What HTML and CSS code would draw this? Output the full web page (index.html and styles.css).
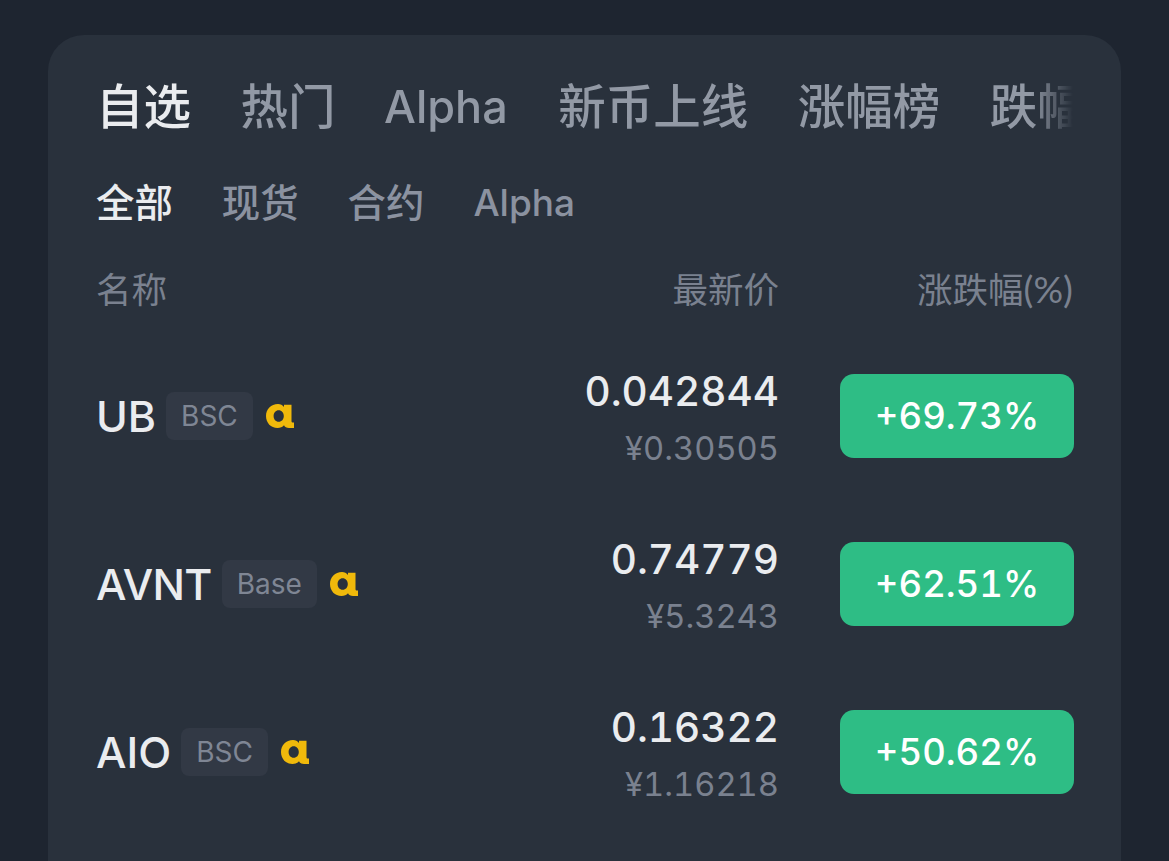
FILE: index.html
```html
<!DOCTYPE html>
<html lang="zh">
<head>
    <meta charset="utf-8">
    <title>自选</title>
    <link rel="stylesheet" href="styles.css">
</head>
<body>
    <div class="card">
      <div class="tabs">
        <span class="tab active">自选</span>
        <span class="tab">热门</span>
        <span class="tab latin">Alpha</span>
        <span class="tab">新币上线</span>
        <span class="tab">涨幅榜</span>
        <span class="tab">跌幅榜</span>
      </div>

      <div class="subtabs">
        <span class="subtab active">全部</span>
        <span class="subtab">现货</span>
        <span class="subtab">合约</span>
        <span class="subtab latin">Alpha</span>
      </div>

      <div class="table-head">
        <span>名称</span>
        <span class="head-price">最新价</span>
        <span class="head-change">涨跌幅<span class="unit">(%)</span></span>
      </div>

      <div class="row">
        <div class="name">
          <span class="symbol">UB</span>
          <span class="chain">BSC</span>
          <svg class="alpha" viewBox="0 0 28 24"><path fill-rule="evenodd" d="M12 0C5 0 0 5 0 12s5 12 11.500 12c2.800 0 5-1 6.500-2.800.8 1.800 2.500 2.800 5 2.800h5v-5.500H27c-1 0-1.500-.5-1.500-1.500V.8H18v2.200C16.500 1 14.500 0 12 0zm.7 6.200c3 0 5.100 2.500 5.100 5.800s-2.100 5.800-5.100 5.800-5.100-2.500-5.100-5.800 2.100-5.800 5.100-5.800z"/></svg>
        </div>
        <div class="price">
          <div class="last">0.042844</div>
          <div class="cny">¥0.30505</div>
        </div>
        <div class="change">+69.73%</div>
      </div>

      <div class="row">
        <div class="name">
          <span class="symbol tight">AVNT</span>
          <span class="chain">Base</span>
          <svg class="alpha" viewBox="0 0 28 24"><path fill-rule="evenodd" d="M12 0C5 0 0 5 0 12s5 12 11.500 12c2.800 0 5-1 6.500-2.800.8 1.800 2.500 2.800 5 2.800h5v-5.500H27c-1 0-1.500-.5-1.500-1.500V.8H18v2.200C16.500 1 14.500 0 12 0zm.7 6.200c3 0 5.100 2.500 5.100 5.800s-2.100 5.800-5.100 5.800-5.100-2.500-5.100-5.800 2.100-5.800 5.100-5.800z"/></svg>
        </div>
        <div class="price">
          <div class="last">0.74779</div>
          <div class="cny">¥5.3243</div>
        </div>
        <div class="change">+62.51%</div>
      </div>

      <div class="row">
        <div class="name">
          <span class="symbol">AIO</span>
          <span class="chain">BSC</span>
          <svg class="alpha" viewBox="0 0 28 24"><path fill-rule="evenodd" d="M12 0C5 0 0 5 0 12s5 12 11.500 12c2.800 0 5-1 6.500-2.800.8 1.800 2.500 2.800 5 2.800h5v-5.500H27c-1 0-1.500-.5-1.500-1.500V.8H18v2.200C16.500 1 14.500 0 12 0zm.7 6.200c3 0 5.100 2.500 5.100 5.800s-2.100 5.800-5.100 5.800-5.100-2.500-5.100-5.800 2.100-5.800 5.100-5.800z"/></svg>
        </div>
        <div class="price">
          <div class="last">0.16322</div>
          <div class="cny">¥1.16218</div>
        </div>
        <div class="change">+50.62%</div>
      </div>
    </div>
</body>
</html>
```

FILE: styles.css
```css
html, body {
  height: 100%;
}

body {
  margin: 0;
  padding: 35px 48px 0;
  box-sizing: border-box;
  overflow: hidden;
  background-color: #1e2530;
  font-family: "Inter", "Noto Sans CJK SC", sans-serif;
  font-variant-numeric: tabular-nums;
}

.card {
  height: 826px;
  padding: 42px 48px 0;
  box-sizing: border-box;
  background-color: #29313c;
  border-radius: 36px 36px 0 0;
}

.tabs {
  display: flex;
  gap: 49.500px;
  height: 60px;
  width: 977px;
  overflow: hidden;
  white-space: nowrap;
  font-size: 47.500px;
  line-height: 60px;
  font-weight: 500;
  color: #9299a5;
  -webkit-mask-image: linear-gradient(to right, #000 935px, transparent 977px);
  mask-image: linear-gradient(to right, #000 935px, transparent 977px);
}

.tab {
  flex: none;
}

.tab.latin {
  margin: 0 1px 0 -1px;
  font-size: 45px;
}

.tab.active {
  color: #eaecef;
}

.subtabs {
  display: flex;
  gap: 49px;
  height: 50px;
  margin-top: 41px;
  font-size: 38.400px;
  line-height: 50px;
  font-weight: 500;
  color: #8b92a0;
}

.subtab.latin {
  font-size: 37px;
}

.subtab.active {
  color: #eaecef;
}

.table-head {
  display: grid;
  grid-template-columns: 1fr 340px 294px;
  margin-top: 40px;
  font-size: 35.500px;
  line-height: 46px;
  color: #7a818f;
}

.head-price,
.head-change {
  text-align: right;
}

.unit {
  font-family: "Lato", sans-serif;
  font-size: 37px;
  line-height: 0;
}

.row {
  display: grid;
  grid-template-columns: 1fr 340px 294px;
  align-items: center;
  height: 168px;
}

.table-head + .row {
  margin-top: 18px;
}

.name {
  display: flex;
  align-items: center;
  gap: 10px;
}

.symbol {
  font-size: 43px;
  font-weight: 500;
  color: #eaecef;
}

.symbol.tight {
  letter-spacing: -0.700px;
}

.chain {
  height: 48px;
  padding: 0 15px;
  border-radius: 8px;
  background-color: #323945;
  font-size: 28px;
  line-height: 48px;
  color: #7f8694;
}

.alpha {
  width: 28px;
  height: 24px;
  margin-left: 3px;
  fill: #f0b90b;
}

.price {
  padding-top: 3px;
  text-align: right;
}

.last {
  font-size: 40.500px;
  line-height: 54px;
  font-weight: 500;
  color: #eaecef;
}

.cny {
  margin-top: 6px;
  font-size: 32.700px;
  line-height: 46px;
  color: #7a818f;
}

.change {
  justify-self: end;
  width: 234px;
  height: 84px;
  margin-right: -1px;
  border-radius: 14px;
  background-color: #2ebd85;
  font-size: 36.500px;
  line-height: 84px;
  font-weight: 500;
  text-align: center;
  color: #fff;
}
```
